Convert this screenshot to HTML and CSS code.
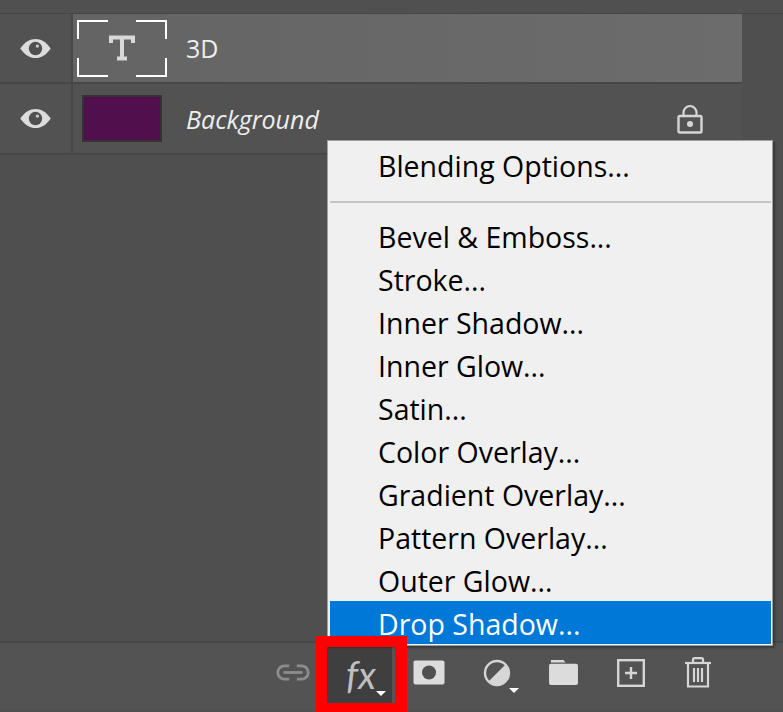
FILE: index.html
```html
<!DOCTYPE html>
<html lang="en">
<head>
    <meta charset="UTF-8">
    <title>Layers</title>
    <link rel="stylesheet" href="styles.css">
</head>
<body>
    <div class="panel">
        <div class="layers">
            <div class="layer-row">
                <div class="eye-cell">
                    <svg width="33" height="21" viewBox="0 0 34 22"><path d="M1 11C6 4 11 1 17 1s11 3 16 10c-5 7-10 10-16 10S6 18 1 11z" fill="#dcdcdc"/><circle cx="17" cy="11" r="7" fill="#505050"/><circle cx="19" cy="8.500" r="1.800" fill="#c8c8c8"/></svg>
                </div>
                <div class="layer-body selected">
                    <div class="type-thumb">
                        <span class="corner tl"></span><span class="corner tr"></span><span class="corner bl"></span><span class="corner br"></span>
                        <svg width="26" height="26" viewBox="0 0 26 26"><path d="M2 8V2.500h22V8M13 2.500V23M8 23.500h10" fill="none" stroke="#d8d8d8" stroke-width="4"/></svg>
                    </div>
                    <span class="layer-name">3D</span>
                </div>
            </div>
            <div class="layer-row tall">
                <div class="eye-cell">
                    <svg width="33" height="21" viewBox="0 0 34 22"><path d="M1 11C6 4 11 1 17 1s11 3 16 10c-5 7-10 10-16 10S6 18 1 11z" fill="#dcdcdc"/><circle cx="17" cy="11" r="7" fill="#505050"/><circle cx="19" cy="8.500" r="1.800" fill="#c8c8c8"/></svg>
                </div>
                <div class="layer-body">
                    <div class="color-thumb"></div>
                    <span class="layer-name italic">Background</span>
                    <svg class="lock" width="26" height="30" viewBox="0 0 26 30"><path d="M6.500 13V8.500a6.500 6.500 0 0 1 13 0V13" fill="none" stroke="#d6d6d6" stroke-width="2.200"/><rect x="1.500" y="12" width="23" height="16.500" rx="1.500" fill="none" stroke="#d6d6d6" stroke-width="2.400"/><circle cx="13" cy="20" r="3" fill="#d6d6d6"/></svg>
                </div>
            </div>
        </div>

        <div class="footer">
            <div class="tool">
                <svg width="36" height="19" viewBox="0 0 36 20"><g fill="none" stroke="#8c8c8c" stroke-width="3"><path d="M14 3H9a7 7 0 0 0 0 14h5"/><path d="M22 3h5a7 7 0 0 1 0 14h-5"/><path d="M8 10h20"/></g></svg>
            </div>
            <div class="tool fx-tool">
                <span class="fx-label">fx</span>
                <span class="caret"></span>
            </div>
            <div class="tool">
                <svg width="32" height="25" viewBox="0 0 32 25"><rect x="0.500" y="0.500" width="31" height="24" rx="2" fill="#dcdcdc"/><circle cx="16" cy="12.500" r="7" fill="#505050"/></svg>
            </div>
            <div class="tool adjust-tool">
                <svg width="28" height="28" viewBox="0 0 28 28"><circle cx="14" cy="14" r="12" fill="none" stroke="#d6d6d6" stroke-width="2.400"/><path d="M22.500 5.500a12 12 0 0 1-17 17z" fill="#d6d6d6"/></svg>
                <span class="caret"></span>
            </div>
            <div class="tool folder-tool">
                <svg width="31" height="27" viewBox="0 0 32 28"><path d="M3 1h13l2 2.500H3z" fill="#dcdcdc"/><path d="M1 7q0-2 2-2h26q2 0 2 2v18q0 2-2 2H3q-2 0-2-2z" fill="#dcdcdc"/></svg>
            </div>
            <div class="tool">
                <svg width="28" height="28" viewBox="0 0 28 28"><rect x="1.200" y="1.200" width="25.600" height="25.600" fill="none" stroke="#d6d6d6" stroke-width="2.400"/><path d="M14 8v12M8 14h12" stroke="#d6d6d6" stroke-width="2.400"/></svg>
            </div>
            <div class="tool trash-tool">
                <svg width="28" height="31" viewBox="0 0 28 31"><g fill="none" stroke="#d6d6d6" stroke-width="2.200"><path d="M1 6h26"/><path d="M9 6V2.500q0-1.400 1.500-1.400h7q1.500 0 1.500 1.400V6"/><path d="M4 6v23.500h20V6"/><path d="M10 11v14M14 11v14M18 11v14"/></g></svg>
            </div>
        </div>
    </div>

    <ul class="menu">
        <li>Blending Options...</li>
        <li class="separator"></li>
        <li>Bevel &amp; Emboss...</li>
        <li>Stroke...</li>
        <li>Inner Shadow...</li>
        <li>Inner Glow...</li>
        <li>Satin...</li>
        <li>Color Overlay...</li>
        <li>Gradient Overlay...</li>
        <li>Pattern Overlay...</li>
        <li>Outer Glow...</li>
        <li class="active">Drop Shadow...</li>
    </ul>

    <div class="red-box"></div>
</body>
</html>
```

FILE: styles.css
```css
body {
    margin: 0;
    background: #505050;
    font-family: "Open Sans", "Noto Sans", sans-serif;
    overflow: hidden;
}

.panel {
    height: 712px;
    display: flex;
    flex-direction: column;
    box-sizing: border-box;
    padding-top: 13px;
}

.layers {
    flex: 1;
    border-top: 1px solid #444;
    background: #4f4f4f;
}

.layer-row {
    display: flex;
    height: 68px;
    border-bottom: 2px solid #474747;
    width: 742px;
    background: #525252;
}

.layer-row.tall {
    height: 69px;
}

.eye-cell {
    width: 71px;
    border-right: 2px solid #484848;
    display: flex;
    align-items: center;
    justify-content: center;
}

.layer-body {
    flex: 1;
    display: flex;
    align-items: center;
    position: relative;
}

.layer-body.selected {
    background: linear-gradient(90deg, #646464, #6c6c6c);
}

.type-thumb {
    position: relative;
    width: 90px;
    height: 57px;
    margin-left: 4px;
    display: flex;
    align-items: center;
    justify-content: center;
}

.corner {
    position: absolute;
    width: 29px;
    height: 17px;
    border: 0 solid #fff;
}

.corner.tl { top: 0; left: 0; border-width: 2px 0 0 2px; }
.corner.tr { top: 0; right: 0; border-width: 2px 2px 0 0; }
.corner.bl { bottom: 0; left: 0; border-width: 0 0 2px 2px; }
.corner.br { bottom: 0; right: 0; border-width: 0 2px 2px 0; }

.color-thumb {
    width: 76px;
    height: 43px;
    margin-left: 9px;
    background: #520f4e;
    border: 2px solid #333;
}

.layer-name {
    margin-left: 19px;
    font-size: 25px;
    color: #eee;
}

.layer-name.italic {
    margin-left: 24px;
    font-style: italic;
}

.lock {
    position: absolute;
    left: 604px;
    top: 20px;
}

.footer {
    height: 69px;
    margin-bottom: 2px;
    border-top: 2px solid #474747;
    background: #535353;
    display: flex;
    justify-content: flex-end;
    align-items: flex-start;
    padding-top: 4px;
    padding-right: 51px;
    box-sizing: border-box;
}

.tool {
    position: relative;
    width: 68px;
    height: 56px;
    box-sizing: border-box;
    padding-bottom: 5px;
    display: flex;
    align-items: center;
    justify-content: center;
}

.folder-tool {
    margin-left: -2px;
}

.trash-tool {
    margin-left: -1px;
}

.fx-tool {
    background: #3f3f3f;
    border-right: 3px solid #555;
    padding-bottom: 2px;
    padding-left: 3px;
}

.fx-label {
    font-family: "Lato", sans-serif;
    font-style: italic;
    font-weight: 400;
    font-size: 38px;
    color: #c0c0c0;
}

.caret {
    position: absolute;
    right: 6px;
    bottom: 7px;
    width: 0;
    height: 0;
    border-left: 5px solid transparent;
    border-right: 5px solid transparent;
    border-top: 5px solid #fff;
}

.adjust-tool .caret {
    right: 12px;
    bottom: 10px;
}

.menu {
    position: absolute;
    left: 327px;
    top: 140px;
    width: 446px;
    height: 506px;
    box-sizing: border-box;
    margin: 0;
    padding: 2px 1px 0 2px;
    list-style: none;
    background: #f0f0f0;
    border: 1px solid #a0a0a0;
    box-shadow: 2px 2px 2px rgba(0, 0, 0, 0.3);
}

.menu li {
    height: 43px;
    line-height: 47px;
    padding-left: 48px;
    font-size: 28.500px;
    color: #000;
}

.menu li.separator {
    height: 2px;
    margin: 15px 0 11px;
    padding: 0;
    background: #c4c4c4;
}

.menu li.active {
    background: #0078d7;
    color: #fff;
}

.red-box {
    position: absolute;
    left: 316px;
    top: 636px;
    width: 91px;
    height: 76px;
    box-sizing: border-box;
    border: solid #f00;
    border-width: 11px 12px 9px 11px;
}
```
